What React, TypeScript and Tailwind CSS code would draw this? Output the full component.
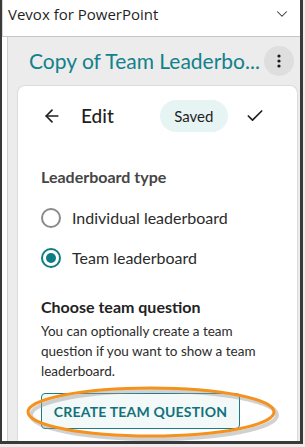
import { ArrowLeft, Check, ChevronDown } from "lucide-react";

const font = { fontFamily: "Lato, 'Noto Sans', sans-serif" };

function Radio({ checked, label }: { checked?: boolean; label: string }) {
  return (
    <div className="flex h-[40px] items-center gap-[11px]">
      <span
        className={
          checked
            ? "flex h-[20px] w-[20px] items-center justify-center rounded-full border-2 border-[#0e7c86]"
            : "flex h-[20px] w-[20px] items-center justify-center rounded-full border-2 border-[#8a8a8a]"
        }
      >
        {checked && <span className="h-[10px] w-[10px] rounded-full bg-[#0e7c86]" />}
      </span>
      <span className="text-[16px] text-[#2b2b2b]">{label}</span>
    </div>
  );
}

export default function App() {
  return (
    <div className="relative h-[447px] w-[305px] overflow-hidden bg-[#ececec]" style={font}>
      <div className="flex h-[444px] w-[303px] flex-col border-b-[3px] border-l-2 border-r-[3px] border-[#3a3a3a] bg-white">
        {/* taskpane header */}
        <div className="flex h-[37px] shrink-0 items-start justify-between border-b border-l border-[#c6c6c6] border-l-[#d4d4d4] pl-[5px] pr-[9px] pt-[3px]">
          <span
            className="text-[15px] text-[#1f1f1f]"
            style={{ fontFamily: "'Open Sans', 'Noto Sans', sans-serif" }}
          >
            Vevox for PowerPoint
          </span>
          <ChevronDown size={18} strokeWidth={1.4} className="mt-[2px] text-[#333]" />
        </div>

        <div className="ml-[5px] flex flex-1 flex-col border-l border-[#cfcfcf] bg-[#ececec]">
          <div className="mt-[9px] flex h-[30px] items-center justify-between pl-[21px] pr-[6px]">
            <span className="truncate text-[21px] text-[#11818b]">Copy of Team Leaderbo...</span>
            <button className="flex h-[30px] w-[30px] shrink-0 items-center justify-center rounded-full bg-[#dedede]">
              <svg width="4" height="14" viewBox="0 0 4 14">
                <circle cx="2" cy="2" r="1.6" fill="#1a1a1a" />
                <circle cx="2" cy="7" r="1.6" fill="#1a1a1a" />
                <circle cx="2" cy="12" r="1.6" fill="#1a1a1a" />
              </svg>
            </button>
          </div>

          <div className="ml-[9px] mr-[2px] mt-[9px] flex-1 rounded-t-lg border border-b-0 border-[#dcdcdc] bg-white pl-[23px] pt-[14px]">
            <div className="flex h-[32px] items-center">
              <ArrowLeft size={20} strokeWidth={2} className="ml-[1px] text-[#1f1f1f]" />
              <span className="ml-[19px] text-[19px] font-medium text-[#1f1f1f]">Edit</span>
              <span className="ml-[46px] flex h-[32px] w-[68px] items-center justify-center rounded-full bg-[#e6f4f4] text-[15px] text-[#1f1f1f]">
                Saved
              </span>
              <Check size={20} strokeWidth={2} className="ml-[17px] text-[#1f1f1f]" />
            </div>

            <div className="mt-[33px] text-[16px] font-bold text-[#454545]">Leaderboard type</div>

            <div className="mt-[9px]">
              <Radio label="Individual leaderboard" />
              <Radio checked label="Team leaderboard" />
            </div>

            <div className="mt-[17px] text-[16px] font-bold text-[#222]">Choose team question</div>
            <p className="mt-[2px] pr-[20px] text-[13.5px] leading-[20px] text-[#2b2b2b]">
              You can optionally create a team question if you want to show a team leaderboard.
            </p>

            <button className="mt-[12px] flex h-[36px] w-[199px] items-center justify-center rounded-[4px] border border-[#1a7d86] bg-[#f3f9f9] text-[14px] font-bold tracking-[0.2px] text-[#11727c]">
              CREATE TEAM QUESTION
            </button>
          </div>
        </div>
      </div>

      {/* annotation ellipse */}
      <svg className="pointer-events-none absolute left-0 top-0" width="305" height="447" viewBox="0 0 305 447">
        <ellipse cx="154" cy="415" rx="123" ry="24" fill="none" stroke="#9a9a9a" strokeOpacity="0.45" strokeWidth="4" />
        <ellipse cx="151" cy="412" rx="123" ry="24" fill="none" stroke="#f5921e" strokeWidth="3" />
      </svg>
    </div>
  );
}
